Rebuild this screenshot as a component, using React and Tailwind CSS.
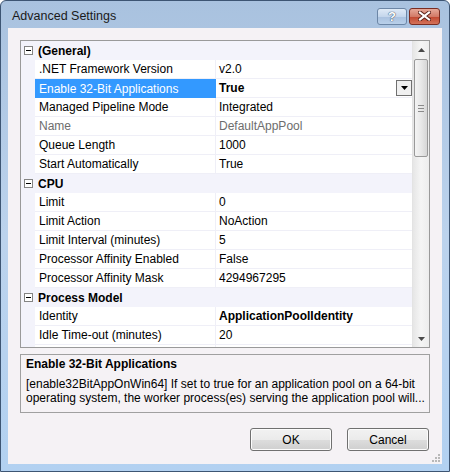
import React from 'react'

const rows = [
  { cat: '(General)' },
  { name: '.NET Framework Version', value: 'v2.0' },
  { name: 'Enable 32-Bit Applications', value: 'True', bold: true, selected: true },
  { name: 'Managed Pipeline Mode', value: 'Integrated' },
  { name: 'Name', value: 'DefaultAppPool', disabled: true },
  { name: 'Queue Length', value: '1000' },
  { name: 'Start Automatically', value: 'True' },
  { cat: 'CPU' },
  { name: 'Limit', value: '0' },
  { name: 'Limit Action', value: 'NoAction' },
  { name: 'Limit Interval (minutes)', value: '5' },
  { name: 'Processor Affinity Enabled', value: 'False' },
  { name: 'Processor Affinity Mask', value: '4294967295' },
  { cat: 'Process Model' },
  { name: 'Identity', value: 'ApplicationPoolIdentity', bold: true },
  { name: 'Idle Time-out (minutes)', value: '20' },
  // next row is scrolled out of view, only its top edge shows
  { name: '', value: '' },
]

const Arrow = ({ up, color = '#4a4a4a' }) => (
  <svg width="7" height="4" viewBox="0 0 7 4">
    <path d={up ? 'M0 4L3.5 0L7 4Z' : 'M0 0H7L3.5 4Z'} fill={color} />
  </svg>
)

const MinusBox = () => (
  <div className="w-[9px] h-[9px] border border-[#848484] bg-white flex items-center justify-center">
    <div className="w-[5px] h-[1px] bg-black" />
  </div>
)

const Row = ({ row }) => {
  if (row.cat) {
    return (
      <div className="flex h-[19px] shrink-0 items-center bg-[#f3f3fb]">
        <div className="w-[14px] flex justify-center">
          <MinusBox />
        </div>
        <span className="pl-[3px] font-bold">{row.cat}</span>
      </div>
    )
  }

  return (
    <div className="flex h-[19px] shrink-0">
      <div className="w-[14px] bg-[#f3f3fb]" />
      <div
        className={
          row.selected
            ? 'w-[181px] flex items-center pl-[4px] bg-[#3399ff] text-white'
            : 'w-[181px] flex items-center pl-[4px] border-b border-r border-[#efeff7] bg-white'
        }>
        <span className={row.disabled ? 'text-[#6d6d6d]' : ''}>{row.name}</span>
      </div>
      <div className="flex-1 flex items-center justify-between pl-[3px] border-b border-[#efeff7] bg-white">
        <span
          className={
            row.disabled ? 'text-[#6d6d6d]' : row.bold ? 'font-bold' : ''
          }>
          {row.value}
        </span>
        {row.selected && (
          <div className="w-[16px] h-[16px] border border-[#707070] bg-[#f0f0f0] flex items-center justify-center">
            <Arrow color="#000" />
          </div>
        )}
      </div>
    </div>
  )
}

const ScrollBar = () => (
  <div className="w-[17px] flex flex-col bg-gradient-to-r from-[#e6e6e6] via-[#f5f5f5] to-[#ededed] border-l border-[#e3e3e3]">
    <div className="h-[17px] flex items-center justify-center">
      <Arrow up />
    </div>
    <div className="flex-1 px-[1px] pt-[1px]">
      <div className="h-[98px] rounded-[2px] border border-[#999] bg-gradient-to-r from-[#f4f4f4] via-[#e8e8e8] to-[#d6d6d6] flex flex-col items-center justify-center gap-[2px]">
        <div className="w-[6px] h-[1px] bg-[#8a8a8a]" />
        <div className="w-[6px] h-[1px] bg-[#8a8a8a]" />
        <div className="w-[6px] h-[1px] bg-[#8a8a8a]" />
      </div>
    </div>
    <div className="h-[17px] flex items-center justify-center">
      <Arrow />
    </div>
  </div>
)

const Button = ({ children }) => (
  <button className="w-[82px] h-[23px] rounded-[3px] border border-[#707070] bg-[linear-gradient(#f2f2f2_0%,#ebebeb_50%,#dddddd_51%,#cfcfcf_100%)] text-black shadow-[inset_0_0_0_1px_#fcfcfc]">
    {children}
  </button>
)

export default function App() {
  return (
    <div className="w-[450px] h-[472px] flex flex-col border border-[#3d5573] rounded-t-[6px] bg-gradient-to-b from-[#a9c2df] via-[#bcd3ed] to-[#b2d1f1] font-['Liberation_Sans',Arial,sans-serif] text-[12px] text-black">
      <div className="h-[27px] shrink-0 flex items-center justify-between pl-[11px] pr-[9px] pt-[3px]">
        <span className="text-[#1a1a1a] text-[12.5px]">Advanced Settings</span>
        <div className="flex gap-[2px]">
          <div className="w-[30px] h-[17px] rounded-[3px] border border-[#6c86a6] bg-[linear-gradient(#dfeaf6_0%,#c4d6ec_50%,#a9c1df_51%,#b9d0ea_100%)] flex items-center justify-center">
            <span className="font-bold text-[13px] leading-none text-white [text-shadow:0_0_1px_#2b3f5a,0_0_1px_#2b3f5a]">?</span>
          </div>
          <div className="w-[31px] h-[17px] rounded-[3px] border border-[#7a2d22] bg-[linear-gradient(#e6a898_0%,#d27a67_50%,#c1462f_51%,#d3735a_100%)] flex items-center justify-center">
            <svg width="13" height="10" viewBox="0 0 13 10">
              <path d="M2 1.5L11 8.5M11 1.5L2 8.5" stroke="#5a2018" strokeWidth="4" strokeLinecap="square" />
              <path d="M2 1.5L11 8.5M11 1.5L2 8.5" stroke="#fff" strokeWidth="2.2" strokeLinecap="square" />
            </svg>
          </div>
        </div>
      </div>

      <div className="relative mx-[7px] h-[436px] shrink-0 bg-[#f5f2f5] px-[12px] pt-[12px] flex flex-col">
        <div className="h-[308px] shrink-0 border border-[#9a9a9a] flex bg-white">
          <div className="flex-1 flex flex-col overflow-hidden">
            {rows.map((row, i) => (
              <Row key={i} row={row} />
            ))}
          </div>
          <ScrollBar />
        </div>

        <div className="mt-[6px] h-[59px] shrink-0 border border-[#a0a0a0] px-[5px] pt-[2px]">
          <div className="font-bold leading-[15px]">Enable 32-Bit Applications</div>
          <div className="mt-[5px] leading-[14px] whitespace-nowrap">
            [enable32BitAppOnWin64] If set to true for an application pool on a 64-bit
          </div>
          <div className="leading-[14px] whitespace-nowrap">
            operating system, the worker process(es) serving the application pool will...
          </div>
        </div>

        <div className="mt-[15px] flex justify-end gap-[15px] pr-[1px]">
          <Button>OK</Button>
          <Button>Cancel</Button>
        </div>

        <svg className="absolute right-[1px] bottom-[1px]" width="10" height="10" viewBox="0 0 10 10">
          <rect x="7" y="1" width="2" height="2" fill="#b8b8b8" />
          <rect x="4" y="4" width="2" height="2" fill="#b8b8b8" />
          <rect x="7" y="4" width="2" height="2" fill="#b8b8b8" />
          <rect x="1" y="7" width="2" height="2" fill="#b8b8b8" />
          <rect x="4" y="7" width="2" height="2" fill="#b8b8b8" />
          <rect x="7" y="7" width="2" height="2" fill="#b8b8b8" />
        </svg>
      </div>
    </div>
  )
}
